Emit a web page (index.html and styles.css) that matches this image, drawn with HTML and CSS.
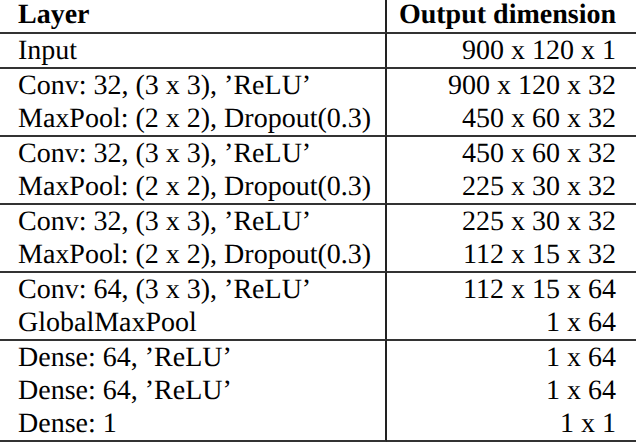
FILE: index.html
```html
<!DOCTYPE html>
<html>
<head>
<meta charset="utf-8">
<link rel="stylesheet" href="styles.css">
</head>
<body>
<table class="arch">
  <thead>
    <tr class="head">
      <th class="c-layer">Layer</th>
      <th class="c-dim">Output dimension</th>
    </tr>
  </thead>
  <tbody>
    <tr class="group"><td class="c-layer">Input</td><td class="c-dim">900 x 120 x 1</td></tr>
    <tr class="group"><td class="c-layer">Conv: 32, (3 x 3), ’ReLU’</td><td class="c-dim">900 x 120 x 32</td></tr>
    <tr><td class="c-layer">MaxPool: (2 x 2), Dropout(0.3)</td><td class="c-dim">450 x 60 x 32</td></tr>
    <tr class="group"><td class="c-layer">Conv: 32, (3 x 3), ’ReLU’</td><td class="c-dim">450 x 60 x 32</td></tr>
    <tr><td class="c-layer">MaxPool: (2 x 2), Dropout(0.3)</td><td class="c-dim">225 x 30 x 32</td></tr>
    <tr class="group"><td class="c-layer">Conv: 32, (3 x 3), ’ReLU’</td><td class="c-dim">225 x 30 x 32</td></tr>
    <tr><td class="c-layer">MaxPool: (2 x 2), Dropout(0.3)</td><td class="c-dim">112 x 15 x 32</td></tr>
    <tr class="group"><td class="c-layer">Conv: 64, (3 x 3), ’ReLU’</td><td class="c-dim">112 x 15 x 64</td></tr>
    <tr><td class="c-layer">GlobalMaxPool</td><td class="c-dim">1 x 64</td></tr>
    <tr class="group"><td class="c-layer">Dense: 64, ’ReLU’</td><td class="c-dim">1 x 64</td></tr>
    <tr><td class="c-layer">Dense: 64, ’ReLU’</td><td class="c-dim">1 x 64</td></tr>
    <tr class="last"><td class="c-layer">Dense: 1</td><td class="c-dim">1 x 1</td></tr>
  </tbody>
</table>
</body>
</html>
```
FILE: styles.css
```css
html, body {
  margin: 0;
  padding: 0;
  background: #ffffff;
}
.arch {
  width: 636px;
  border-collapse: separate;
  border-spacing: 0;
  font-family: "Liberation Serif", "Times New Roman", serif;
  font-size: 28px;
  color: #000;
  table-layout: fixed;
  text-rendering: geometricPrecision;
}
.arch th,
.arch td {
  padding: 0;
  height: 33px;
  line-height: 33px;
  white-space: nowrap;
  box-sizing: border-box;
}
.arch th {
  font-weight: bold;
  height: 32px;
  line-height: 29px;
  padding-bottom: 3px;
}
.arch .c-layer {
  width: 387px;
  text-align: left;
  padding-left: 18px;
  border-right: 2px solid #222;
}
.arch .c-dim {
  text-align: right;
  padding-right: 20px;
}
.arch .group td {
  border-top: 2px solid #333;
  height: 35px;
}
.arch .last td {
  border-bottom: 2px solid #333;
  height: 35px;
}
```
